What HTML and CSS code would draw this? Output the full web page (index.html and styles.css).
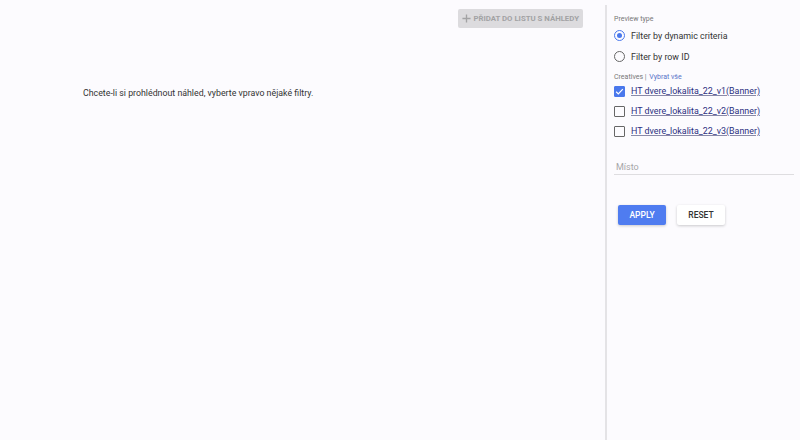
FILE: index.html
```html
<!DOCTYPE html>
<html lang="cs">
<head>
<meta charset="utf-8">
<title>Náhledy</title>
<link rel="stylesheet" href="styles.css">
</head>
<body>
<div class="page">
  <main class="preview">
    <div class="toolbar">
      <button class="btn-add" disabled>
        <svg width="9" height="9" viewBox="0 0 10 10"><path d="M5 0.5v9M0.5 5h9" stroke="currentColor" stroke-width="1.5"/></svg>
        Přidat do listu s náhledy
      </button>
    </div>
    <p class="hint">Chcete-li si prohlédnout náhled, vyberte vpravo nějaké filtry.</p>
  </main>
  <aside class="filters">
    <div class="label">Preview type</div>
    <label class="radio checked"><span class="dot"></span>Filter by dynamic criteria</label>
    <label class="radio"><span class="dot"></span>Filter by row ID</label>
    <div class="label creatives">Creatives | <a class="select-all">Vybrat vše</a></div>
    <label class="check checked">
      <span class="box"><svg width="9" height="9" viewBox="0 0 10 10"><path d="M1.3 5.2l2.4 2.4 5-5.2" fill="none" stroke="#fff" stroke-width="1.4"/></svg></span>
      <a>HT dvere_lokalita_22_v1(Banner)</a>
    </label>
    <label class="check"><span class="box"></span><a>HT dvere_lokalita_22_v2(Banner)</a></label>
    <label class="check"><span class="box"></span><a>HT dvere_lokalita_22_v3(Banner)</a></label>
    <div class="field"><input type="text" placeholder="Místo"></div>
    <div class="actions">
      <button class="btn apply">Apply</button>
      <button class="btn reset">Reset</button>
    </div>
  </aside>
</div>
</body>
</html>
```
FILE: styles.css
```css
html, body {
  margin: 0;
  height: 100%;
  background: #fcfbfe;
  font-family: Roboto, "Liberation Sans", sans-serif;
  color: #333;
}
.page {
  display: flex;
  height: 440px;
}
.preview {
  width: 605px;
  flex: none;
}
.toolbar {
  display: flex;
  justify-content: flex-end;
  padding: 9px 22px 0 0;
}
.btn-add {
  display: flex;
  align-items: center;
  gap: 2px;
  height: 19px;
  padding: 0 4px 0 4px;
  border: none;
  border-radius: 2px;
  background: #dcdbde;
  color: #a2a2a4;
  font-family: inherit;
  font-size: 7.8px;
  font-weight: 700;
  text-transform: uppercase;
}
.hint {
  margin: 60px 0 0 83px;
  font-size: 8.8px;
  color: #333;
}
.filters {
  flex: 1;
  margin-top: 5px;
  border-left: 2px solid #e4e3e6;
  padding: 9px 6px 0 7px;
}
.label {
  font-size: 7px;
  color: #777;
  line-height: 11px;
}
.radio, .check {
  display: flex;
  align-items: center;
  gap: 6px;
  height: 20px;
  font-size: 8.9px;
  color: #333;
}
.radio { height: 21px; }
.dot {
  box-sizing: border-box;
  width: 11px;
  height: 11px;
  border: 1.5px solid #666;
  border-radius: 50%;
  display: flex;
  align-items: center;
  justify-content: center;
}
.radio.checked .dot { border-color: #4a78ec; }
.radio.checked .dot::after {
  content: "";
  width: 5px;
  height: 5px;
  border-radius: 50%;
  background: #4a78ec;
}
.creatives {
  margin-top: 5px;
  margin-bottom: -1px;
  line-height: 10px;
}
.select-all {
  color: #5874c9;
  margin-left: 1px;
}
.check a {
  color: #2b2f80;
  text-decoration: underline;
  text-decoration-color: #8a8aa8;
}
.box {
  box-sizing: border-box;
  width: 11px;
  height: 11px;
  border: 1.5px solid #666;
  border-radius: 1px;
  display: flex;
  align-items: center;
  justify-content: center;
}
.check.checked .box {
  background: #4a78ec;
  border-color: #4a78ec;
}
.field {
  margin-top: 14px;
  border-bottom: 1px solid #dedde0;
}
.field input {
  box-sizing: border-box;
  width: 100%;
  border: none;
  background: transparent;
  padding: 4px 2px 0;
  font-family: inherit;
  font-size: 9px;
  line-height: 11px;
  outline: none;
}
.field input::placeholder { color: #a6a6a8; }
.actions {
  display: flex;
  gap: 11px;
  margin: 30px 0 0 4px;
}
.btn {
  height: 20px;
  width: 48px;
  border: none;
  border-radius: 2px;
  font-family: inherit;
  font-size: 8.5px;
  font-weight: 500;
  text-transform: uppercase;
  box-shadow: 0 1px 3px rgba(0, 0, 0, 0.2);
}
.apply {
  background: #4f7cf0;
  color: #fff;
}
.reset {
  background: #fff;
  color: #333;
}
```
